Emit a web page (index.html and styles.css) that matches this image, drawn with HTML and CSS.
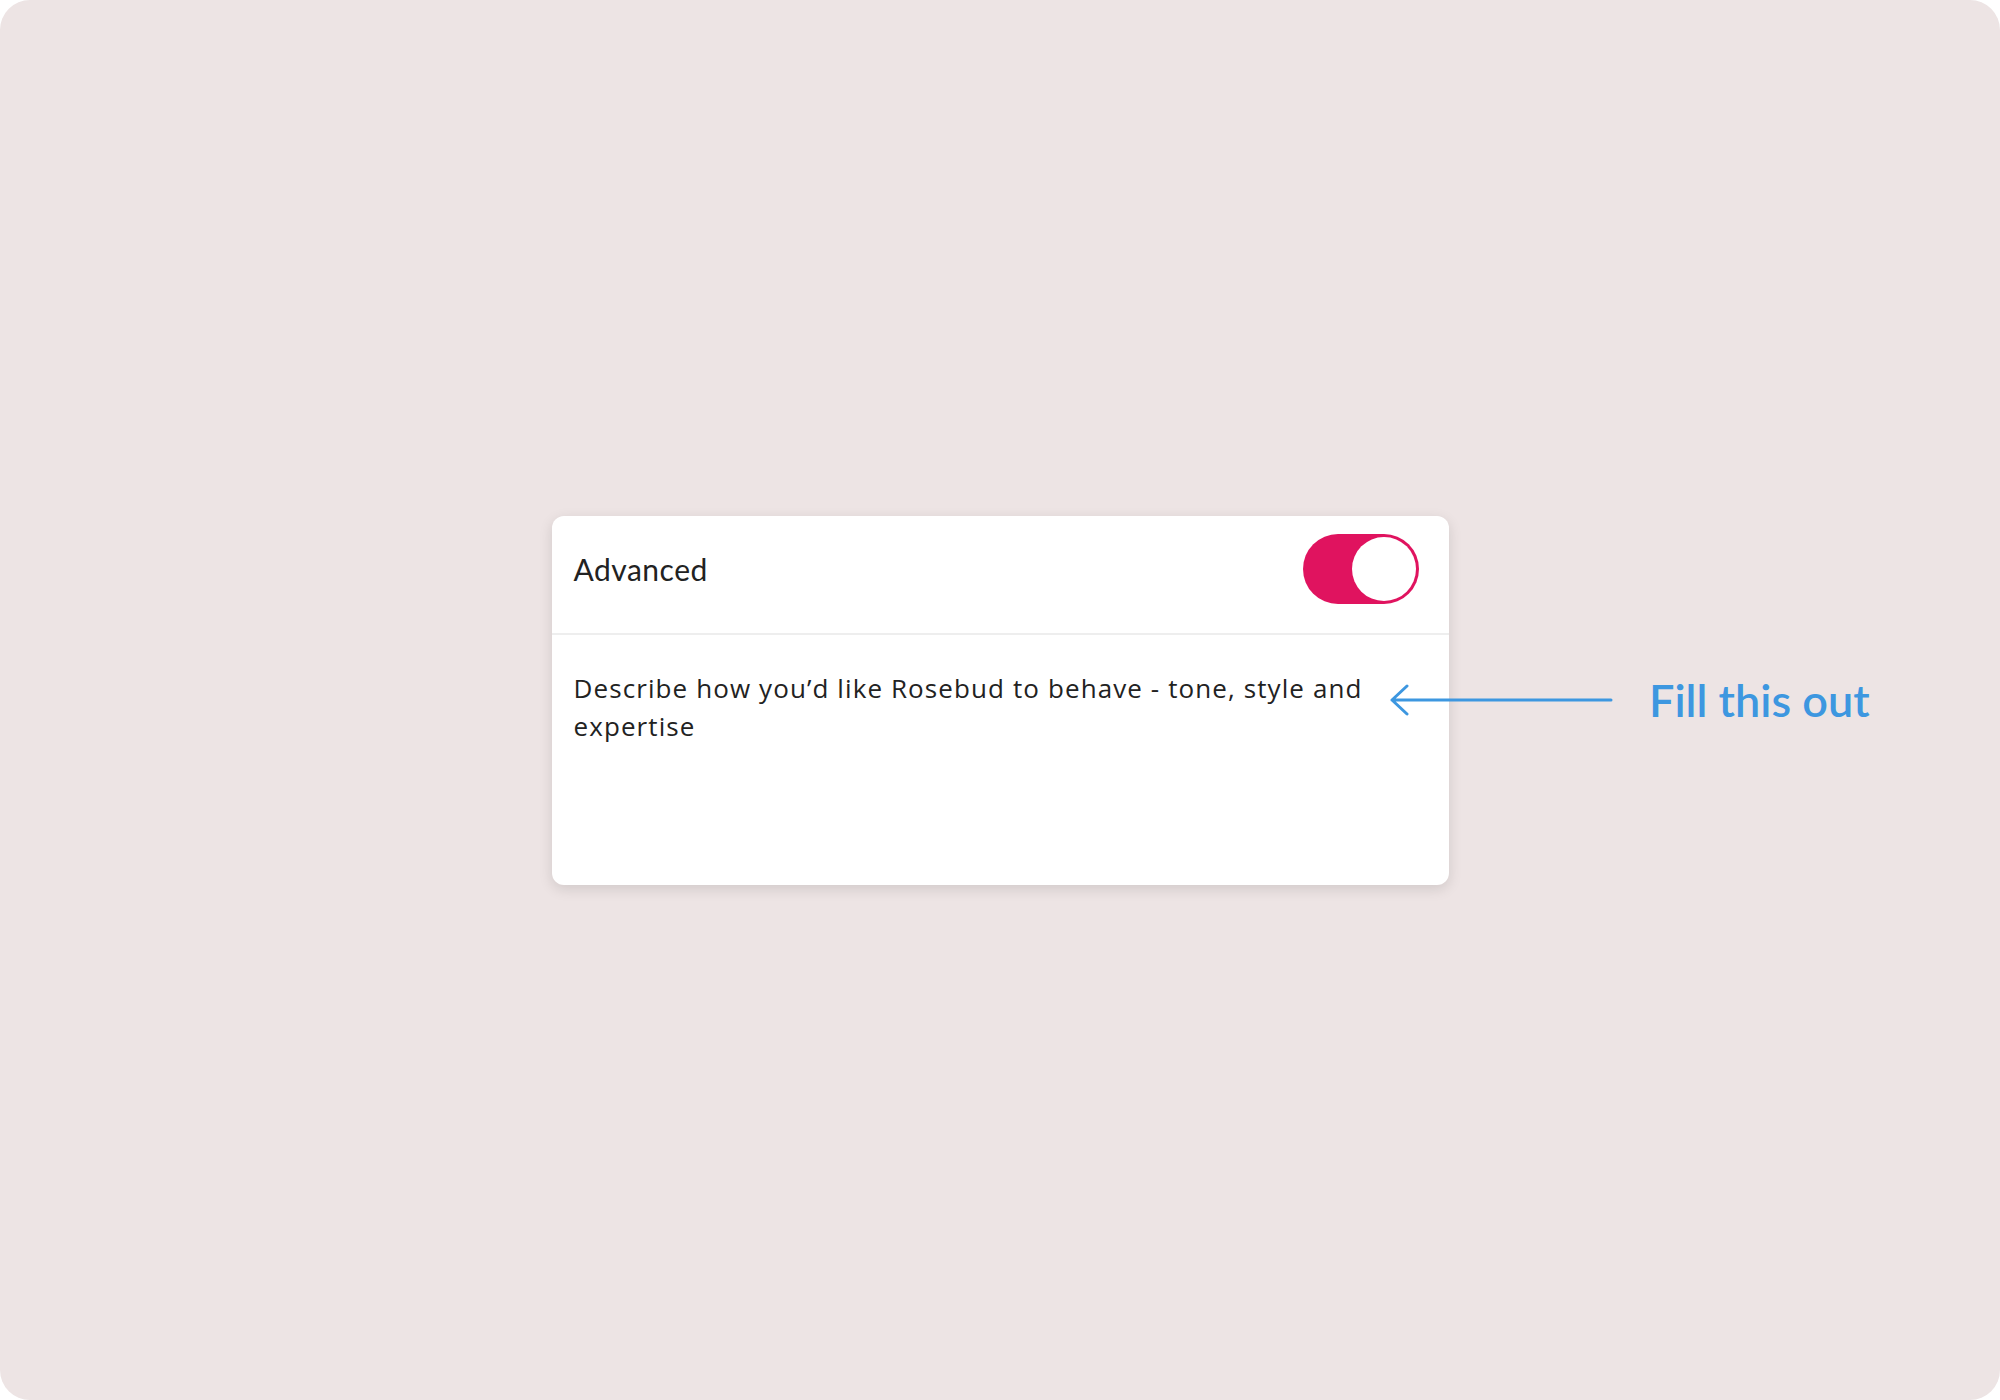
FILE: index.html
```html
<!DOCTYPE html>
<html lang="en">
<head>
    <meta charset="UTF-8">
    <meta name="viewport" content="width=device-width, initial-scale=1.0">
    <title>Advanced settings</title>
    <link rel="stylesheet" href="styles.css">
</head>
<body>
    <div class="frame">
        <div class="card">
            <div class="card-header">
                <span class="card-title">Advanced</span>
                <div class="toggle on">
                    <div class="knob"></div>
                </div>
            </div>
            <div class="card-body">
                <p class="prompt">Describe how you’d like Rosebud to behave - tone, style and expertise</p>
            </div>
        </div>

        <div class="callout">
            <svg class="arrow" width="224" height="34" viewBox="0 0 224 34">
                <path d="M3 17 H222 M18 3 L3 17 L18 31" fill="none" stroke="#3d97e0" stroke-width="3" stroke-linecap="round" stroke-linejoin="round"/>
            </svg>
            <span class="callout-text">Fill this out</span>
        </div>
    </div>
</body>
</html>
```

FILE: styles.css
```css
body {
    margin: 0;
    background-color: #ffffff;
    font-family: Lato, 'Noto Sans', sans-serif;
}

.frame {
    position: relative;
    width: 2000px;
    height: 1400px;
    border-radius: 30px;
    background-color: #ede4e4;
    display: flex;
    align-items: center;
    justify-content: center;
}

.card {
    width: 897px;
    height: 369px;
    background-color: white;
    border-radius: 12px;
    box-shadow: 0 4px 14px rgba(0, 0, 0, 0.12);
    display: flex;
    flex-direction: column;
    overflow: hidden;
}

.card-header {
    height: 119px;
    display: flex;
    align-items: center;
    justify-content: space-between;
    padding: 0 30px 10px 22px;
    box-sizing: border-box;
    border-bottom: 2px solid #eeeeee;
}

.card-title {
    font-size: 30px;
    letter-spacing: 0.5px;
    color: #222222;
}

.toggle {
    width: 116px;
    height: 70px;
    border-radius: 35px;
    background-color: #e0135f;
    display: flex;
    align-items: center;
    padding: 0 3px;
    box-sizing: border-box;
}

.toggle.on {
    justify-content: flex-end;
}

.knob {
    width: 64px;
    height: 64px;
    border-radius: 50%;
    background-color: white;
}

.card-body {
    flex: 1;
    padding: 34px 22px;
}

.prompt {
    margin: 0;
    font-family: 'Open Sans', Lato, sans-serif;
    font-size: 26px;
    letter-spacing: 1.1px;
    line-height: 38px;
    color: #222222;
    max-width: 815px;
}

.callout {
    position: absolute;
    left: 1389px;
    top: 673px;
    display: flex;
    align-items: center;
    gap: 36px;
}

.callout-text {
    font-size: 45px;
    font-weight: 600;
    color: #3d97e0;
}
```
